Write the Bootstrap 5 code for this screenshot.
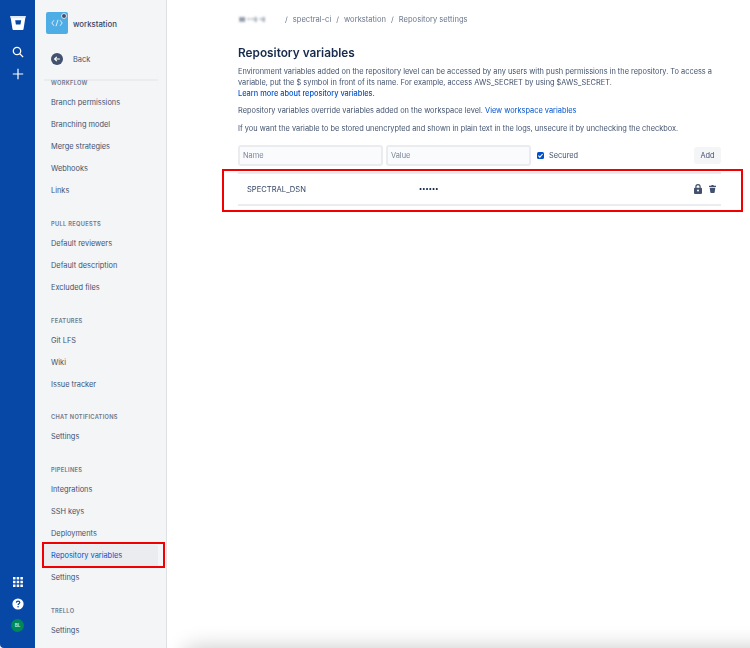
<!DOCTYPE html>
<html lang="en"><head><meta charset="utf-8"><title>Repository variables</title>
<link href="https://cdn.jsdelivr.net/npm/bootstrap@5.3.0/dist/css/bootstrap.min.css" rel="stylesheet">
<style>
html,body{height:648px;overflow:hidden;background:#fff}
body{font-family:Inter,"Liberation Sans",sans-serif;font-size:7.4px;color:#42526e;line-height:11px}
.app-shell{height:648px;position:relative;overflow:hidden}
.app-soft{filter:blur(.25px);height:648px}
.global-rail{width:35px;background:#0747a6;border-radius:0 0 0 4px;padding-top:15px}
.side-panel{width:132px;background:#f4f5f7;border-right:1px solid #dfe1e6;overflow:hidden}
.repo-head{height:46px;padding:12px 0 0 11px;gap:5px}
.repo-avatar{width:22px;height:22px;border-radius:2px;background:#4fade6;position:relative}
.repo-lock{position:absolute;right:1px;top:1px;width:6px;height:6px;border-radius:50%;background:#42526e;border:1px solid #dfe1e6}
.repo-name{font-size:7.8px;font-weight:500;color:#344563;margin-top:7px}
.back-row{height:33px;padding:0 0 7px 16px;gap:10px}
.side-rule{height:2px;background:#ebecf0;margin:0 8px 0 9px}
.nav-head{height:18px;line-height:18px;padding-left:16px;font-size:5.7px;font-weight:600;letter-spacing:.3px;color:#6b778c;text-transform:uppercase}
.nav-head-top{height:11px;line-height:4px}
.nav-group{margin-bottom:12.75px}
.nav-entry{display:block;height:22px;line-height:22px;color:#42526e;text-decoration:none;font-size:7.4px;margin-left:8px;padding-left:8px;margin-right:8px}
.nav-entry.current{background:#ebecf0;color:#0052cc;border-radius:2px}
.page-pane{padding:14px 29px 0 71px;min-width:0}
.crumbs{font-size:7.6px;color:#6b778c;height:11px;gap:5px;padding-left:1px;white-space:nowrap}
.crumb-blur{filter:blur(1px);color:#97a0af;min-width:41px;font-size:6.4px}
.crumb-dark{color:#6b778c}
.page-title{font-size:11.8px;font-weight:600;color:#172b4d;line-height:18px;margin:19px 0 4px}
.page-copy{margin:0 0 6px;color:#42526e;white-space:nowrap}
.page-copy-wide{margin-bottom:7px}
.page-copy a,.strong-link{color:#0052cc;text-decoration:none}
.strong-link{font-weight:500}
.var-form{margin-top:11px;height:21px;gap:3px}
.var-input{width:145px;height:21px;min-height:21px;border:2px solid #ebecf0;background:#fafbfc;border-radius:3px;padding:0 3px;font-size:7.4px;color:#42526e;font-family:inherit;box-shadow:none}
.var-input::placeholder{color:#7a869a;opacity:1}
.secure-box{width:7px;height:7px;background:#0052cc;border-radius:1.5px;margin:0 2px 0 3px;flex:none}
.add-button{width:27px;height:17px;background:#f4f5f7;border-radius:3px;border:0;padding:0;font-size:7.4px;color:#42526e;line-height:17px;font-family:inherit}
.var-row{margin-top:6px;height:34px;border-top:2px solid #ebecf0;border-bottom:2px solid #ebecf0;padding:0 4px 0 9px}
.var-key{width:172px;font-size:7.6px;color:#344563}
.var-dots{letter-spacing:.1px;color:#172b4d;font-size:6.6px;font-weight:700;line-height:8px}
.red-mark{position:absolute;border:2px solid #f00000;pointer-events:none}
.red-one{left:222px;top:169px;width:521px;height:43px}
.red-two{left:42px;top:542px;width:123px;height:26px}
.bottom-shade{position:absolute;left:187px;right:-30px;top:652px;height:30px;border-radius:10px;box-shadow:0 0 22px 4px rgba(0,0,0,.22)}
</style></head><body>
<div class="app-shell">
<div class="app-soft d-flex">
  <nav class="global-rail d-flex flex-column align-items-center flex-shrink-0">
    <svg width="16" height="16" viewBox="0 0 16 16" aria-label="Bitbucket"><path fill="#fff" d="M.4 1h15.2l-2.1 13.2c-.1.5-.4.8-.9.8H3.4c-.5 0-.8-.3-.9-.8z"/><path fill="#0747a6" d="M5.2 5.2h6l-.7 4.2H5.9z"/><path fill="#deebff" d="M.4 1h15.2l-.4 2.3H.8z"/></svg>
    <svg style="margin-top:15px" width="12" height="12" viewBox="0 0 12 12" fill="none" stroke="#fff" stroke-width="1.3" aria-label="Search"><circle cx="5" cy="5" r="3.7"/><path d="M7.8 7.8l3.3 3.3"/></svg>
    <svg style="margin-top:10px" width="12" height="12" viewBox="0 0 12 12" stroke="#fff" stroke-width="1.2" aria-label="Create"><path d="M6 .8v10.4M.8 6h10.4"/></svg>
    <div class="mt-auto d-flex flex-column align-items-center" style="padding-bottom:16px">
      <svg width="10" height="10" viewBox="0 0 10 10" fill="#fff" aria-label="Apps"><path d="M0 0h2.5v2.5H0zM3.7 0h2.5v2.5H3.7zM7.4 0h2.5v2.5H7.4zM0 3.7h2.5v2.5H0zM3.7 3.7h2.5v2.5H3.7zM7.4 3.7h2.5v2.5H7.4zM0 7.4h2.5v2.5H0zM3.7 7.4h2.5v2.5H3.7zM7.4 7.4h2.5v2.5H7.4z"/></svg>
      <svg style="margin-top:11px" width="12" height="12" viewBox="0 0 12 12" aria-label="Help"><circle cx="6" cy="6" r="5.6" fill="#fff"/><path d="M4.3 4.6c.1-1 .8-1.5 1.8-1.5s1.7.6 1.7 1.4c0 1.2-1.7 1.2-1.7 2.5" fill="none" stroke="#0747a6" stroke-width="1.2"/><circle cx="6.1" cy="8.8" r=".8" fill="#0747a6"/></svg>
      <div class="d-flex align-items-center justify-content-center rounded-circle" style="margin-top:9px;width:13px;height:13px;background:#00875a;color:#b9e5d2;font-size:4.6px;font-weight:700">BL</div>
    </div>
  </nav>
  <aside class="side-panel flex-shrink-0">
    <div class="repo-head d-flex align-items-start">
      <div class="repo-avatar d-flex align-items-center justify-content-center">
        <svg width="12" height="8" viewBox="0 0 12 8" fill="none" stroke="#d8ecfa" stroke-width="1"><path d="M3 1.2L.8 4 3 6.8M9 1.2L11.2 4 9 6.8M7 .8L5 7.2"/></svg>
        <span class="repo-lock"></span>
      </div>
      <span class="repo-name">workstation</span>
    </div>
    <div class="back-row d-flex align-items-center">
      <svg width="12" height="12" viewBox="0 0 12 12" aria-label="Back"><circle cx="6" cy="6" r="6" fill="#42526e"/><path d="M8.8 6H3.6M5.8 3.8L3.6 6l2.2 2.2" fill="none" stroke="#fff" stroke-width="1.2"/></svg>
      <span>Back</span>
    </div>
    <div class="side-rule"></div>
    <div>
      <div class="nav-head nav-head-top">Workflow</div>
      <div class="nav-group">
        <a class="nav-entry" href="#">Branch permissions</a><a class="nav-entry" href="#">Branching model</a><a class="nav-entry" href="#">Merge strategies</a><a class="nav-entry" href="#">Webhooks</a><a class="nav-entry" href="#">Links</a>
      </div>
      <div class="nav-group"><div class="nav-head">Pull requests</div>
        <a class="nav-entry" href="#">Default reviewers</a><a class="nav-entry" href="#">Default description</a><a class="nav-entry" href="#">Excluded files</a>
      </div>
      <div class="nav-group"><div class="nav-head">Features</div>
        <a class="nav-entry" href="#">Git LFS</a><a class="nav-entry" href="#">Wiki</a><a class="nav-entry" href="#">Issue tracker</a>
      </div>
      <div class="nav-group"><div class="nav-head">Chat notifications</div>
        <a class="nav-entry" href="#">Settings</a>
      </div>
      <div class="nav-group"><div class="nav-head">Pipelines</div>
        <a class="nav-entry" href="#">Integrations</a><a class="nav-entry" href="#">SSH keys</a><a class="nav-entry" href="#">Deployments</a><a class="nav-entry current" href="#">Repository variables</a><a class="nav-entry" href="#">Settings</a>
      </div>
      <div class="nav-group"><div class="nav-head">Trello</div>
        <a class="nav-entry" href="#">Settings</a>
      </div>
    </div>
  </aside>
  <main class="page-pane flex-grow-1">
    <div class="crumbs d-flex align-items-center">
      <span class="crumb-blur"><span class="crumb-dark">▮▮</span> ▪▪▮ ▪▮</span><span>/</span><span>spectral-ci</span><span>/</span><span>workstation</span><span>/</span><span>Repository settings</span>
    </div>
    <h1 class="page-title">Repository variables</h1>
    <p class="page-copy">Environment variables added on the repository level can be accessed by any users with push permissions in the repository. To access a<br>variable, put the $ symbol in front of its name. For example, access AWS_SECRET by using $AWS_SECRET.<br><a class="strong-link" href="#">Learn more about repository variables.</a></p>
    <p class="page-copy page-copy-wide">Repository variables override variables added on the workspace level. <a href="#">View workspace variables</a></p>
    <p class="page-copy">If you want the variable to be stored unencrypted and shown in plain text in the logs, unsecure it by unchecking the checkbox.</p>
    <div class="var-form d-flex align-items-center">
      <input class="var-input form-control" placeholder="Name" aria-label="Name">
      <input class="var-input form-control" placeholder="Value" aria-label="Value">
      <svg class="secure-box" viewBox="0 0 7 7" aria-label="Secured checked"><path d="M1.4 3.6l1.5 1.5 2.7-3.1" fill="none" stroke="#fff" stroke-width="1.1"/></svg>
      <span>Secured</span>
      <button class="add-button btn ms-auto" type="button">Add</button>
    </div>
    <div class="var-row d-flex align-items-center">
      <span class="var-key">SPECTRAL_DSN</span>
      <span class="var-dots">••••••</span>
      <svg class="ms-auto" width="8" height="10" viewBox="0 0 8 10" aria-label="Secured"><path fill="#42526e" fill-rule="evenodd" d="M1.3 3.8V2.7a2.7 2.7 0 0 1 5.4 0v1.1h.4c.5 0 .9.4.9.9v4.4c0 .5-.4.9-.9.9H.9c-.5 0-.9-.4-.9-.9V4.7c0-.5.4-.9.9-.9zm1.2 0h3V2.7a1.5 1.5 0 0 0-3 0zM4 5.6a1 1 0 1 0 0 2 1 1 0 0 0 0-2z"/></svg>
      <svg style="margin-left:7px;margin-right:1px" width="7" height="8" viewBox="0 0 7 8" aria-label="Delete"><path fill="#42526e" d="M0 .8h2.2L2.6 0h1.8l.4.8H7V2H0zM.7 2.7h5.6l-.6 4.6c0 .4-.4.7-.8.7H2.1c-.4 0-.8-.3-.8-.7z"/></svg>
    </div>
  </main>
</div>
  <div class="red-mark red-one"></div>
  <div class="red-mark red-two"></div>
  <div class="bottom-shade"></div>
</div>
<script src="https://cdn.jsdelivr.net/npm/bootstrap@5.3.0/dist/js/bootstrap.bundle.min.js"></script>
</body></html>
